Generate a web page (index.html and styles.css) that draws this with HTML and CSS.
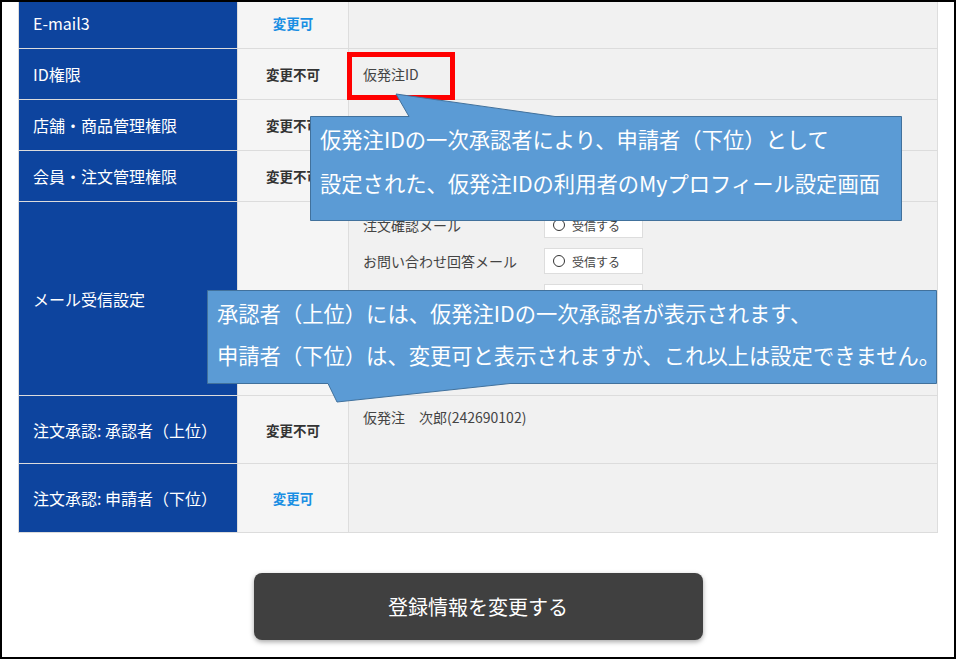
FILE: index.html
```html
<!DOCTYPE html>
<html>

<head>
	<meta charset="utf-8">
	<title>Myプロフィール設定</title>
	<link rel="stylesheet" href="styles.css">
</head>

<body>
	<div class="screen">
		<div class="form">
			<div class="row">
				<div class="th">E-mail3</div>
				<div class="mid"><span class="ok">変更可</span></div>
				<div class="val"></div>
			</div>
			<div class="row">
				<div class="th">ID権限</div>
				<div class="mid"><span class="ng">変更不可</span></div>
				<div class="val">仮発注ID</div>
			</div>
			<div class="row">
				<div class="th">店舗・商品管理権限</div>
				<div class="mid"><span class="ng">変更不可</span></div>
				<div class="val"></div>
			</div>
			<div class="row">
				<div class="th">会員・注文管理権限</div>
				<div class="mid"><span class="ng">変更不可</span></div>
				<div class="val"></div>
			</div>
			<div class="row row-mail">
				<div class="th">メール受信設定</div>
				<div class="mid"></div>
				<div class="val mail-list">
					<div class="mail-item"><span class="mail-name">注文確認メール</span><span class="radio"><i></i>受信する</span></div>
					<div class="mail-item"><span class="mail-name">お問い合わせ回答メール</span><span class="radio"><i></i>受信する</span></div>
					<div class="mail-item"><span class="mail-name"></span><span class="radio"></span></div>
					<div class="mail-item"><span class="mail-name"></span><span class="radio"></span></div>
					<div class="mail-item"><span class="mail-name"></span><span class="radio"></span></div>
				</div>
			</div>
			<div class="row row-appr">
				<div class="th">注文承認: 承認者（上位）</div>
				<div class="mid"><span class="ng">変更不可</span></div>
				<div class="val val-top">仮発注　次郎(242690102)</div>
			</div>
			<div class="row row-req">
				<div class="th">注文承認: 申請者（下位）</div>
				<div class="mid"><span class="ok">変更可</span></div>
				<div class="val"></div>
			</div>
		</div>

		<div class="actions">
			<button class="submit">登録情報を変更する</button>
		</div>

		<!-- 注釈 -->
		<div class="mark"></div>

		<div class="callout c1">
			<svg class="shape" width="592" height="105">
				<polygon points="0.5,0.5 99,0.5 86,-22 245,0.5 591.5,0.5 591.5,104.5 0.5,104.5" />
			</svg>
			<p>仮発注IDの一次承認者により、申請者（下位）として<br>設定された、仮発注IDの利用者のMyプロフィール設定画面</p>
		</div>

		<div class="callout c2">
			<svg class="shape" width="730" height="94">
				<polygon points="0.5,0.5 729.5,0.5 729.5,93.5 303,93.5 130,112 121,93.5 0.5,93.5" />
			</svg>
			<p>承認者（上位）には、仮発注IDの一次承認者が表示されます、<br>申請者（下位）は、変更可と表示されますが、これ以上は設定できません。</p>
		</div>
	</div>
</body>

</html>
```

FILE: styles.css
```css
html,
body {
	margin: 0;
	padding: 0;
	background: #fff;
}

.screen {
	position: relative;
	width: 956px;
	height: 659px;
	box-sizing: border-box;
	border: 2px solid #000;
	overflow: hidden;
	background: #fff;
	font-family: "Noto Sans CJK JP", "Noto Sans", sans-serif;
}

.form {
	width: 920px;
	margin: -4px 0 0 16px;
	border-left: 1px solid #ddd;
	box-sizing: border-box;
}

.row {
	display: flex;
	height: 51px;
	box-sizing: border-box;
	border-bottom: 1px solid #dcdcdc;
}

.row-mail {
	height: 194px;
}

.row-appr {
	height: 68px;
}

.row-req {
	height: 69px;
}

.th {
	width: 219px;
	box-sizing: border-box;
	border-right: 1px solid #ddd;
	background: #0d449e;
	color: #fff;
	font-size: 16px;
	line-height: 20px;
	padding-left: 14px;
	display: flex;
	align-items: center;
}

.mid {
	width: 111px;
	box-sizing: border-box;
	border-right: 1px solid #ddd;
	background: #f5f5f5;
	display: flex;
	align-items: center;
	justify-content: center;
	font-size: 13.5px;
	font-weight: bold;
}

.mid .ng {
	color: #333;
}

.mid .ok {
	color: #1a8fe3;
}

.val {
	flex: 1;
	box-sizing: border-box;
	border-right: 1px solid #ddd;
	background: #f1f1f1;
	padding-left: 14px;
	display: flex;
	align-items: center;
	font-size: 14px;
	color: #444;
}

.val-top {
	align-items: flex-start;
	padding-top: 11px;
	line-height: 20px;
}

.mail-list {
	flex-direction: column;
	align-items: flex-start;
	padding-top: 10px;
	gap: 10px;
}

.mail-item {
	display: flex;
	align-items: center;
	height: 26px;
}

.mail-name {
	width: 181px;
	font-size: 14px;
	color: #444;
}

.radio {
	width: 99px;
	height: 26px;
	box-sizing: border-box;
	border: 1px solid #ddd;
	background: #fff;
	display: flex;
	align-items: center;
	padding-left: 8px;
	font-size: 12px;
	color: #444;
}

.radio i {
	width: 12px;
	height: 12px;
	box-sizing: border-box;
	border: 1.5px solid #333;
	border-radius: 50%;
	margin-right: 7px;
}

.actions {
	margin-top: 40px;
}

.submit {
	display: block;
	width: 449px;
	height: 67px;
	margin: 0 auto;
	border: none;
	border-radius: 8px;
	background: #404040;
	box-shadow: 0 2px 5px rgba(0, 0, 0, 0.35);
	color: #fff;
	font-family: "Noto Sans CJK JP", "Noto Sans", sans-serif;
	font-size: 20px;
}

/* 赤枠 */
.mark {
	position: absolute;
	left: 345px;
	top: 50px;
	width: 108px;
	height: 48px;
	box-sizing: border-box;
	border: 5px solid #f00;
}

.callout {
	position: absolute;
}

.callout .shape {
	position: absolute;
	left: 0;
	top: 0;
	overflow: visible;
}

.callout .shape polygon {
	fill: #5b9bd5;
	stroke: #41719c;
	stroke-width: 1;
}

.callout p {
	position: relative;
	margin: 0;
	padding-left: 10px;
	color: #fff;
	font-size: 21.3px;
	white-space: nowrap;
}

.c1 {
	left: 308px;
	top: 114px;
	width: 592px;
	height: 105px;
}

.c1 p {
	padding-top: 1px;
	line-height: 44px;
}

.c2 {
	left: 205px;
	top: 288px;
	width: 730px;
	height: 94px;
}

.c2 p {
	padding-top: 2px;
	line-height: 42px;
}
```
